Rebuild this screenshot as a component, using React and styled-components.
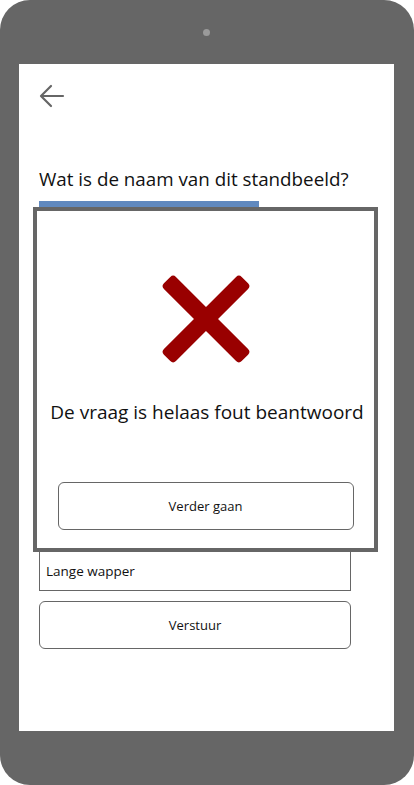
import React from "react";
import styled, { createGlobalStyle } from "styled-components";

const GlobalStyle = createGlobalStyle`
  html, body {
    margin: 0;
    padding: 0;
    background: #ffffff;
  }
  body {
    font-family: "Open Sans", "Noto Sans", sans-serif;
    color: #111;
  }
  * {
    box-sizing: border-box;
  }
`;

const Phone = styled.div`
  width: 414px;
  height: 785px;
  background: #666666;
  border-radius: 30px;
  display: flex;
  flex-direction: column;
  align-items: center;
  padding: 0 20px 54px 19px;
`;

const Bezel = styled.div`
  height: 64px;
  width: 100%;
  display: flex;
  align-items: center;
  justify-content: center;
`;

const Camera = styled.div`
  width: 7px;
  height: 7px;
  border-radius: 50%;
  background: #9a9a9a;
`;

const Screen = styled.div`
  position: relative;
  flex: 1;
  width: 100%;
  background: #ffffff;
  display: flex;
  flex-direction: column;
  padding: 20px 43px 0 20px;
`;

const BackButton = styled.button`
  width: 26px;
  height: 24px;
  padding: 0;
  border: none;
  background: none;
  display: flex;
  cursor: pointer;
`;

const Title = styled.h1`
  margin: 58px 0 0;
  font-size: 18.8px;
  font-weight: 400;
  line-height: 26px;
  color: #111;
  white-space: nowrap;
`;

const Progress = styled.div`
  margin-top: 9px;
  width: 220px;
  height: 10px;
  background: #6089bf;
`;

const ImageArea = styled.div`
  height: 340px;
`;

const Input = styled.input`
  width: 312px;
  height: 40px;
  border: 1px solid #666;
  padding: 0 6px;
  font-family: inherit;
  font-size: 13.5px;
  color: #111;
  outline: none;
`;

const Button = styled.button`
  width: ${({ $wide }) => ($wide ? "296px" : "312px")};
  height: 48px;
  margin-top: ${({ $gap }) => $gap || 0}px;
  border: 1px solid #666;
  border-radius: 6px;
  background: #fff;
  font-family: inherit;
  font-size: 13px;
  color: #111;
  cursor: pointer;
`;

const Overlay = styled.div`
  position: absolute;
  left: 14px;
  top: 143px;
  width: 345px;
  height: 345px;
  border: 4px solid #666;
  background: #fff;
  display: flex;
  flex-direction: column;
  align-items: center;
  padding-top: 61px;
`;

const Message = styled.p`
  margin: 33px 0 0 3px;
  font-size: 19px;
  line-height: 26px;
  color: #111;
  white-space: nowrap;
`;

const Actions = styled.div`
  margin-top: 57px;
  display: flex;
  justify-content: center;
`;

const ArrowIcon = () => (
  <svg width="26" height="24" viewBox="0 0 26 24" fill="none">
    <path
      d="M24 12H2.5M12 2L2 12l10 10"
      stroke="#666"
      strokeWidth="2.2"
      strokeLinecap="round"
      strokeLinejoin="round"
    />
  </svg>
);

const CrossIcon = () => (
  <svg width="94" height="94" viewBox="0 0 94 94">
    <g fill="#990000" transform="translate(47 47)">
      <rect x="-55" y="-8.5" width="110" height="17" rx="4" transform="rotate(45)" />
      <rect x="-55" y="-8.5" width="110" height="17" rx="4" transform="rotate(-45)" />
    </g>
  </svg>
);

const App = () => {
  return (
    <>
      <GlobalStyle />
      <Phone>
        <Bezel>
          <Camera />
        </Bezel>
        <Screen>
          <BackButton aria-label="Terug">
            <ArrowIcon />
          </BackButton>
          <Title>Wat is de naam van dit standbeeld?</Title>
          <Progress />
          <ImageArea />
          <Input defaultValue="Lange wapper" />
          <Button $gap={10}>Verstuur</Button>

          <Overlay>
            <CrossIcon />
            <Message>De vraag is helaas fout beantwoord</Message>
            <Actions>
              <Button $wide>Verder gaan</Button>
            </Actions>
          </Overlay>
        </Screen>
      </Phone>
    </>
  );
};

export default App;
